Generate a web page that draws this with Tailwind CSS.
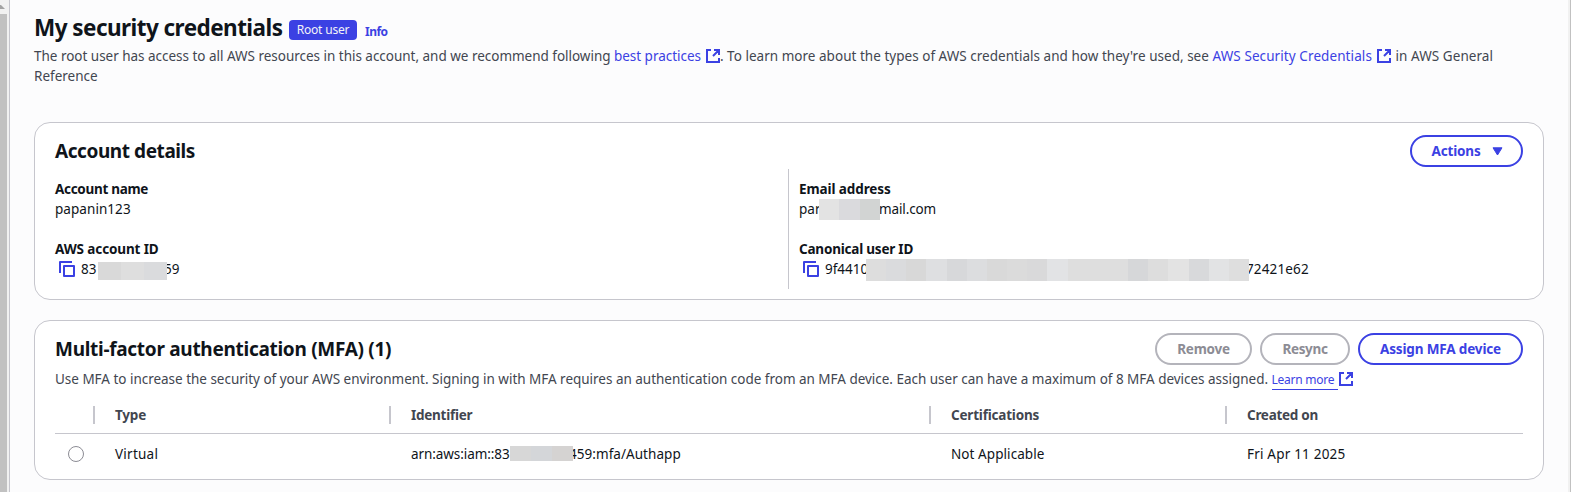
<!DOCTYPE html>
<html lang="en">
<head>
<meta charset="utf-8">
<title>My security credentials</title>
<script src="https://cdn.jsdelivr.net/npm/@tailwindcss/browser@4"></script>
</head>
<body class="flex h-[492px] w-[1571px] overflow-hidden bg-[#fcfcfd] font-['Noto_Sans',sans-serif] text-[13.5px] leading-5 text-[#0f141a]">
<svg class="hidden">
  <symbol id="external" viewBox="0 0 14 14"><path d="M5 1H1v12h12V9M8 1h5v5M13 1L7 7" fill="none" stroke="#3b41e3" stroke-width="2"/></symbol>
  <symbol id="copy" viewBox="0 0 16 16"><path d="M1 12V1h12M5 5h10v10H5z" fill="none" stroke="#3b41e3" stroke-width="2" stroke-linejoin="round"/></symbol>
</svg>

<div class="flex h-full w-[10px] shrink-0 border-r border-[#c6c6cd] bg-[#f1f1f1]">
  <div class="flex w-[7px] flex-col">
    <svg class="h-[14px] w-[7px]" viewBox="0 0 7 14"><path d="M0 5h1l4 4H0z" fill="#a3a3a3"/></svg>
    <div class="flex-1 bg-[#c1c1c1]"></div>
  </div>
</div>

<main class="flex-1 pl-6 pr-6">
  <header class="h-[122px] pt-3">
    <div class="flex h-[34px] items-start whitespace-nowrap">
      <h1 class="w-[255px] pt-px text-[22.5px] font-bold leading-[30px] tracking-[-0.55px]">My security credentials</h1>
      <span class="mt-2 flex h-5 w-[68px] items-center justify-center rounded bg-[#3b41e3] text-xs tracking-[-0.2px] text-[#f3f3f7]">Root user</span>
      <a class="ml-2 mt-[10px] text-xs font-bold leading-5 tracking-[-0.5px] text-[#3b41e3]">Info</a>
    </div>
    <p class="whitespace-nowrap text-[#424650]"><span class="tracking-[-0.02px]">The root user has access to all AWS resources in this account, and we recommend following </span><a class="tracking-[-0.03px] text-[#3b41e3]">best practices<svg class="ml-[5px] inline h-[14px] w-[14px] align-[-2px]"><use href="#external"/></svg></a><span class="tracking-[0.025px]">. To learn more about the types of AWS credentials and how they're used, see </span><a class="tracking-[0.09px] text-[#3b41e3]">AWS Security Credentials<svg class="ml-[5px] inline h-[14px] w-[14px] align-[-2px]"><use href="#external"/></svg></a><span class="ml-px tracking-[0.06px]"> in AWS General</span><br>Reference</p>
  </header>

  <section class="h-[178px] w-[1510px] rounded-2xl border border-[#c6c6cd] bg-white px-5 pt-3">
    <div class="flex h-[34px] justify-between">
      <h2 class="pt-[2px] text-[19px] font-bold leading-7 tracking-[-0.43px]">Account details</h2>
      <button class="flex h-8 w-[113px] items-center justify-center gap-[11px] rounded-full border-2 border-[#3b41e3] pl-px font-bold tracking-[-0.17px] text-[#3b41e3]">Actions<svg class="h-[9px] w-[11px]" viewBox="0 0 11 9"><path d="M1 .8h9L5.500 8z" fill="#3b41e3" stroke="#3b41e3" stroke-linejoin="round"/></svg></button>
    </div>
    <div class="flex h-[120px]">
      <dl class="w-[733px] pt-[10px]">
        <dt class="font-bold tracking-[-0.3px]">Account name</dt>
        <dd class="tracking-[0.06px]">papanin123</dd>
        <dt class="mt-5 font-bold tracking-[-0.12px]">AWS account ID</dt>
        <dd class="flex pl-1">
          <svg class="mr-[6px] mt-[2px] h-4 w-4"><use href="#copy"/></svg>
          <span class="w-[17px]">83</span>
          <span class="relative z-10 mt-[3px] flex h-[18px] w-[69px]"><i class="flex-1 bg-[#d9d9d9]"></i><i class="flex-1 bg-[#dedede]"></i><i class="flex-1 bg-[#dadbdd]"></i></span>
          <span class="-ml-[3px]">59</span>
        </dd>
      </dl>
      <dl class="border-l border-[#c6c6cd] pl-[10px] pt-[10px]">
        <dt class="font-bold tracking-[-0.1px]">Email address</dt>
        <dd class="flex">
          <span class="w-5">par</span>
          <span class="relative z-10 flex h-[21px] w-[61px]"><i class="flex-1 bg-[#e3e3e3]"></i><i class="flex-1 bg-[#dadadd]"></i><i class="flex-1 bg-[#d2d4d3]"></i></span>
          <span class="-ml-px tracking-[-0.12px]">mail.com</span>
        </dd>
        <dt class="mt-[19px] font-bold tracking-[-0.21px]">Canonical user ID</dt>
        <dd class="flex">
          <svg class="ml-1 mr-[6px] mt-[2px] h-4 w-4"><use href="#copy"/></svg>
          <span class="w-[41px]">9f4410</span>
          <span class="relative z-10 flex h-[22px] w-[383px]"><i class="flex-1 bg-[#dddddd]"></i><i class="flex-1 bg-[#dadbdd]"></i><i class="flex-1 bg-[#d8d8d8]"></i><i class="flex-1 bg-[#dedfe1]"></i><i class="flex-1 bg-[#d7d8da]"></i><i class="flex-1 bg-[#dcdddf]"></i><i class="flex-1 bg-[#d9d9d9]"></i><i class="flex-1 bg-[#dbdbdb]"></i><i class="flex-1 bg-[#d9d9da]"></i><i class="flex-1 bg-[#e2e3e5]"></i><i class="flex-1 bg-[#dedede]"></i><i class="flex-1 bg-[#dedede]"></i><i class="flex-1 bg-[#dedede]"></i><i class="flex-1 bg-[#d6d7d9]"></i><i class="flex-1 bg-[#dddddd]"></i><i class="flex-1 bg-[#e3e3e3]"></i><i class="flex-1 bg-[#d8d9db]"></i><i class="flex-1 bg-[#e2e3e4]"></i><i class="flex-1 bg-[#dedede]"></i></span>
          <span class="-ml-[3px] tracking-[0.15px]">72421e62</span>
        </dd>
      </dl>
    </div>
  </section>

  <section class="mt-5 h-[160px] w-[1510px] rounded-2xl border border-[#c6c6cd] bg-white px-5 pt-3">
    <div class="flex h-9 justify-between">
      <h2 class="pt-[2px] text-[19px] font-bold leading-7 tracking-[-0.29px]">Multi-factor authentication (MFA) (1)</h2>
      <div class="flex gap-2 font-bold">
        <button class="h-8 w-[97px] rounded-full border-2 border-[#b4b4bb] tracking-[-0.25px] text-[#8c8c94]">Remove</button>
        <button class="h-8 w-[90px] rounded-full border-2 border-[#b4b4bb] tracking-[-0.35px] text-[#8c8c94]">Resync</button>
        <button class="h-8 w-[165px] rounded-full border-2 border-[#3b41e3] tracking-[-0.15px] text-[#3b41e3]">Assign MFA device</button>
      </div>
    </div>
    <p class="whitespace-nowrap text-[#424650]"><span class="tracking-[-0.019px]">Use MFA to increase the security of your AWS environment. Signing in with MFA requires an authentication code from an MFA device. Each user can have a maximum of 8 MFA devices assigned. </span><a class="text-[#3b41e3]"><span class="inline-block h-[19px] w-[66px] border-b border-[#3b41e3] text-xs leading-[18px] tracking-[-0.25px]">Learn more</span><svg class="ml-px inline h-[14px] w-[14px] align-[-2px]"><use href="#external"/></svg></a></p>
    <div class="-mt-px grid h-[45px] grid-cols-[40px_296px_540px_296px_296px] items-center border-b border-[#c6c6cd] pb-px pt-[9px] font-bold text-[#424650]">
      <span class="h-[18px] w-[40px] border-r-2 border-[#c6c6cd]"></span>
      <span class="flex h-[18px] items-center border-r-2 border-[#c6c6cd] pl-5 tracking-[-0.2px]">Type</span>
      <span class="flex h-[18px] items-center border-r-2 border-[#c6c6cd] pl-5 tracking-[-0.25px]">Identifier</span>
      <span class="flex h-[18px] items-center border-r-2 border-[#c6c6cd] pl-5 tracking-[-0.2px]">Certifications</span>
      <span class="pl-5 tracking-[-0.28px]">Created on</span>
    </div>
    <div class="grid h-10 grid-cols-[40px_296px_540px_296px_296px] items-center">
      <span class="ml-[13px] h-4 w-4 rounded-full border border-[#8c8c94]"></span>
      <span class="pl-5 tracking-[0.25px]">Virtual</span>
      <span class="flex pl-5">
        <span class="w-[99px] tracking-[-0.08px]">arn:aws:iam::83</span>
        <span class="relative z-10 mt-[2px] flex h-[15px] w-[63px]"><i class="flex-1 bg-[#d7d7d7]"></i><i class="flex-1 bg-[#d4d6d9]"></i><i class="flex-1 bg-[#d5d3d2]"></i></span>
        <span class="-ml-1 tracking-[0.05px]">459:mfa/Authapp</span>
      </span>
      <span class="pl-5 tracking-[0.07px]">Not Applicable</span>
      <span class="pl-5 tracking-[0.2px]">Fri Apr 11 2025</span>
    </div>
  </section>
</main>

<div class="h-full w-[3px] shrink-0 border-r border-[#c1c1c1] bg-[#f1f1f1]"></div>
</body>
</html>
